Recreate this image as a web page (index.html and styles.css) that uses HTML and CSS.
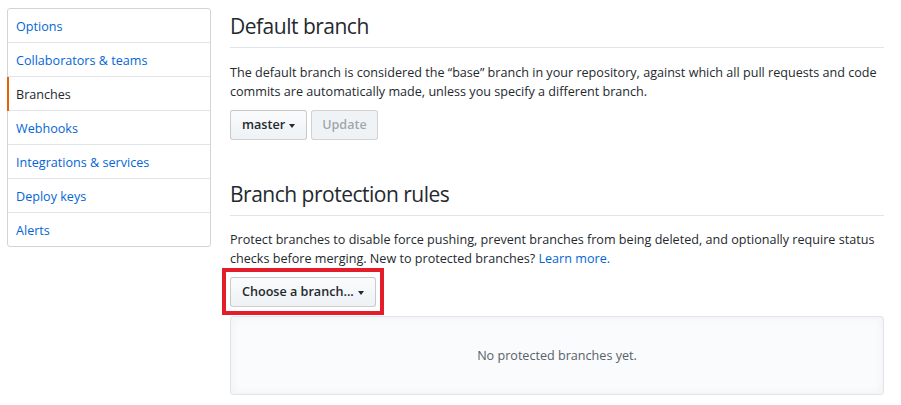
FILE: index.html
```html
<!DOCTYPE html>
<html lang="en">
<head>
<meta charset="utf-8">
<title>Branches</title>
<link rel="stylesheet" href="styles.css">
</head>
<body>
<div class="layout">
  <nav class="menu">
    <a class="menu-item" href="#">Options</a>
    <a class="menu-item" href="#">Collaborators &amp; teams</a>
    <a class="menu-item selected" href="#">Branches</a>
    <a class="menu-item" href="#">Webhooks</a>
    <a class="menu-item" href="#">Integrations &amp; services</a>
    <a class="menu-item" href="#">Deploy keys</a>
    <a class="menu-item last" href="#">Alerts</a>
  </nav>
  <main class="content">
    <div class="subhead">
      <h2 class="subhead-heading">Default branch</h2>
    </div>
    <p class="text">The default branch is considered the “base” branch in your repository, against which all pull requests and code commits are automatically made, unless you specify a different branch.</p>
    <div class="btn-row">
      <button class="btn">master <span class="caret"></span></button>
      <button class="btn disabled">Update</button>
    </div>

    <div class="subhead spacious">
      <h2 class="subhead-heading">Branch protection rules</h2>
    </div>
    <p class="text second">Protect branches to disable force pushing, prevent branches from being deleted, and optionally require status checks before merging. New to protected branches? <a class="link" href="#">Learn more.</a></p>
    <div class="btn-row">
      <span class="highlight">
        <button class="btn">Choose a branch... <span class="caret"></span></button>
      </span>
    </div>
    <div class="blankslate">No protected branches yet.</div>
  </main>
</div>
</body>
</html>
```

FILE: styles.css
```css
html, body {
  margin: 0;
  padding: 0;
  background: #fff;
}
body {
  font-family: "Open Sans", "Noto Sans", sans-serif;
  font-size: 12.6px;
  line-height: 19px;
  color: #24292e;
}
.layout {
  display: flex;
  align-items: flex-start;
  gap: 19px;
  padding: 8px 17px 0 7px;
}
.menu {
  width: 204px;
  box-sizing: border-box;
  border: 1px solid #d1d5da;
  border-radius: 3px;
  display: flex;
  flex-direction: column;
  flex-shrink: 0;
}
.menu-item {
  position: relative;
  display: block;
  height: 19px;
  padding: 8px 8px 6px;
  line-height: 19px;
  color: #0366d6;
  text-decoration: none;
  border-bottom: 1px solid #e1e4e8;
}
.menu-item.last {
  border-bottom: 0;
}
.menu-item.selected {
  color: #24292e;
}
.menu-item.selected::before {
  content: "";
  position: absolute;
  left: -1px;
  top: 0;
  bottom: -1px;
  width: 2px;
  background: #e36209;
}
.content {
  flex: 1;
  min-width: 0;
  padding-top: 3px;
}
.subhead {
  border-bottom: 1px solid #e1e4e8;
  padding-bottom: 6px;
}
.subhead.spacious {
  margin-top: 39px;
}
.subhead-heading {
  margin: 0;
  font-size: 21px;
  letter-spacing: -0.5px;
  font-weight: 400;
  line-height: 30px;
}
.text {
  margin: 15px 0 9px;
}
.text.second {
  margin-top: 14px;
}
.btn-row {
  display: flex;
  gap: 4px;
}
.btn {
  font-family: inherit;
  font-size: 12.6px;
  font-weight: 600;
  line-height: 18px;
  color: #24292e;
  padding: 5px 11px;
  border: 1px solid rgba(27, 31, 35, 0.2);
  border-radius: 3px;
  background: linear-gradient(-180deg, #fafbfc 0%, #eff3f6 90%);
  display: inline-flex;
  align-items: center;
  gap: 4px;
  margin: 0;
}
.btn.disabled {
  color: rgba(36, 41, 46, 0.4);
  background: #eff3f6;
  border-color: rgba(27, 31, 35, 0.15);
  padding: 5px 10px;
}
.caret {
  display: inline-block;
  width: 0;
  height: 0;
  border-top: 4px solid #24292e;
  border-left: 3.5px solid transparent;
  border-right: 3.5px solid transparent;
  margin-top: 2px;
}
.link {
  color: #0366d6;
  text-decoration: none;
}
.highlight {
  position: relative;
  display: inline-block;
}
.highlight::after {
  content: "";
  position: absolute;
  top: -9px;
  left: -8px;
  right: -8px;
  bottom: -8px;
  border: 4px solid #e41d2b;
  pointer-events: none;
}
.blankslate {
  margin-top: 9px;
  padding: 29px 16px;
  border: 1px solid #e1e4e8;
  border-radius: 3px;
  background: #fafbfc;
  box-shadow: inset 0 0 10px rgba(27, 31, 35, 0.05);
  text-align: center;
  color: #586069;
}
```
